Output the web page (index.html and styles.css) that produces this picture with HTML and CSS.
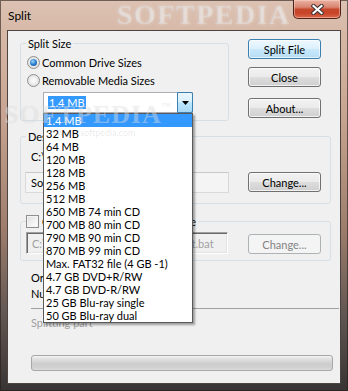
FILE: index.html
```html
<!DOCTYPE html>
<html>
<head>
<meta charset="utf-8">
<title>Split</title>
<link rel="stylesheet" href="styles.css">
</head>
<body>
<div class="window">
  <div class="titlebar">
    <span class="title">Split</span>
    <span class="wm-title">SOFTPEDIA</span>
    <span class="close-btn">
      <svg width="13" height="11" viewBox="0 0 13 11"><path d="M2.5 2l8 7M10.5 2l-8 7" stroke="#3a3030" stroke-width="4.2" stroke-linecap="square" fill="none"/><path d="M2.5 2l8 7M10.5 2l-8 7" stroke="#ffffff" stroke-width="2.2" stroke-linecap="square" fill="none"/></svg>
    </span>
  </div>
  <div class="client">
    <div class="top-row">
      <fieldset class="group g-size">
        <legend>Split Size</legend>
        <div class="size-body">
          <div class="opt"><span class="radio checked"></span><span>Common Drive Sizes</span></div>
          <div class="opt opt2"><span class="radio"></span><span>Removable Media Sizes</span></div>
          <div class="combo">
            <span class="combo-text"><span class="sel">1.4 MB</span></span>
            <span class="combo-btn"><svg width="7" height="4" viewBox="0 0 7 4"><path d="M0 0h7L3.5 4z" fill="#000"/></svg></span>
            <ul class="combo-list">
              <li class="hl">1.4 MB</li>
              <li>32 MB</li>
              <li>64 MB</li>
              <li>120 MB</li>
              <li>128 MB</li>
              <li>256 MB</li>
              <li>512 MB</li>
              <li>650 MB 74 min CD</li>
              <li>700 MB 80 min CD</li>
              <li>790 MB 90 min CD</li>
              <li>870 MB 99 min CD</li>
              <li>Max. FAT32 file (4 GB -1)</li>
              <li>4.7 GB DVD+R/RW</li>
              <li>4.7 GB DVD-R/RW</li>
              <li>25 GB Blu-ray single</li>
              <li>50 GB Blu-ray dual</li>
            </ul>
          </div>
        </div>
      </fieldset>
      <div class="buttons">
        <span class="btn default">Split File</span>
        <span class="btn b-close">Close</span>
        <span class="btn b-about">About...</span>
      </div>
    </div>

    <fieldset class="group g-wide g-dest">
      <legend>Destination</legend>
      <div class="dest-body">
        <div class="dest-path">C:\Users\Softpedia\Desktop</div>
        <div class="field-row">
          <span class="textbox">Softpedia Test File.zip</span>
          <span class="btn">Change...</span>
        </div>
      </div>
    </fieldset>

    <fieldset class="group g-wide g-batch">
      <legend class="chk-legend"><span class="checkbox"></span><span>Create a batch file to recombine</span></legend>
      <div class="batch-body">
        <div class="field-row">
          <span class="textbox disabled">C:\Users\Softpedia\Desktop\Split.bat</span>
          <span class="btn disabled b-change2">Change...</span>
        </div>
      </div>
    </fieldset>

    <div class="info">
      <div class="line">Original size:</div>
      <div class="line line2">Number of parts:</div>
    </div>
    <div class="sep"></div>
    <div class="status">Splitting part</div>
    <div class="progress"></div>
  </div>
  <span class="wm-client">SOFTPEDIA<sup>™</sup></span>
  <span class="wm-url">www.softpedia.com</span>
</div>
</body>
</html>
```
FILE: styles.css
```css
html, body {
  margin: 0;
  padding: 0;
}
body {
  width: 348px;
  height: 391px;
  overflow: hidden;
  font-family: Lato, "Segoe UI", "Noto Sans", sans-serif;
  font-size: 11px;
  line-height: 13px;
  color: #000;
}
.window {
  position: relative;
  width: 348px;
  height: 391px;
  box-sizing: border-box;
  padding: 0 7px 7px 7px;
  display: flex;
  flex-direction: column;
  background: linear-gradient(180deg, #dcc2b3 0px, #d7b9a8 30px, #c6a390 120px, #9c7d6c 230px, #5e5450 320px, #383434 391px);
  box-shadow: inset 0 0 0 1px rgba(40, 28, 24, 0.6);
}
.titlebar {
  position: relative;
  height: 30px;
  flex: none;
  display: flex;
  justify-content: space-between;
  align-items: flex-start;
}
.title {
  margin: 9px 0 0 1px;
  font-size: 12px;
  line-height: 14px;
}
.wm-title {
  position: absolute;
  left: 110px;
  top: 1px;
  font-family: "Liberation Serif", serif;
  font-weight: bold;
  font-size: 28px;
  line-height: 28px;
  letter-spacing: 1.5px;
  color: rgba(255, 255, 255, 0.42);
  text-shadow: 0 0 3px rgba(255, 255, 255, 0.5), 0 0 1px rgba(110, 80, 70, 0.3);
}
.close-btn {
  position: relative;
  width: 48px;
  height: 19px;
  box-sizing: border-box;
  border: 1px solid #4e2218;
  border-top: none;
  border-radius: 0 0 5px 5px;
  background: linear-gradient(180deg, #eab2a2 0%, #d98570 40%, #c6472b 52%, #c8462a 75%, #dd6a4c 100%);
  box-shadow: inset 0 0 0 1px rgba(255, 220, 210, 0.45);
  display: flex;
  align-items: center;
  justify-content: center;
}
.client {
  flex: 1;
  border: 1px solid #4d4340;
  background: #f0f0f0;
  padding: 6px 0 0 12px;
  display: flex;
  flex-direction: column;
  align-items: flex-start;
}
.top-row {
  display: flex;
  align-items: flex-start;
}
.group {
  margin: 0;
  padding: 0;
  border: 1px solid #d5dfe5;
  border-radius: 3px;
  min-inline-size: 0;
  box-sizing: border-box;
}
.group legend {
  margin-left: 5px;
  padding: 0 2px;
  line-height: 13px;
}
.g-size {
  width: 209px;
}
.size-body {
  padding: 6px 0 7px 6px;
}
.opt {
  display: flex;
  align-items: center;
  gap: 2px;
  height: 13px;
}
.opt2 {
  margin-top: 5px;
}
.radio {
  position: relative;
  width: 13px;
  height: 13px;
  box-sizing: border-box;
  border-radius: 50%;
  border: 1px solid #8e8f8f;
  background: radial-gradient(circle at 50% 50%, #ffffff 0%, #f0f0f0 40%, #d4d4d4 100%);
  flex: none;
}
.radio.checked::after {
  content: "";
  position: absolute;
  left: 2px;
  top: 2px;
  width: 7px;
  height: 7px;
  border-radius: 50%;
  background: radial-gradient(circle at 40% 35%, #9ad8f8 0%, #2c7fd0 50%, #0d3f7e 100%);
}
.combo {
  position: relative;
  margin: 5px 0 0 16px;
  width: 150px;
  height: 21px;
  box-sizing: border-box;
  border: 1px solid #abadb3;
  background: #fff;
  display: flex;
}
.combo-text {
  flex: 1;
  display: flex;
  align-items: center;
  padding-left: 4px;
}
.sel {
  background: #3399ff;
  color: #fff;
  padding: 0 1px;
  line-height: 13px;
}
.combo-btn {
  width: 16px;
  height: 21px;
  margin: -1px -1px -1px 0;
  box-sizing: border-box;
  border: 1px solid #3c7fb1;
  border-radius: 0 2px 2px 0;
  background: linear-gradient(180deg, #eaf6fd 0%, #d9f0fc 50%, #bee6fd 50%, #a7d9f5 100%);
  display: flex;
  align-items: center;
  justify-content: center;
}
.combo-list {
  position: absolute;
  left: -1px;
  top: 20px;
  width: 150px;
  margin: 0;
  padding: 0;
  list-style: none;
  box-sizing: border-box;
  border: 1px solid #5a5a5a;
  background: #fff;
  box-shadow: 2px 2px 2px rgba(0, 0, 0, 0.35);
  z-index: 5;
}
.combo-list li {
  height: 13px;
  line-height: 13px;
  padding-left: 2px;
  white-space: nowrap;
}
.combo-list li.hl {
  background: #3399ff;
  color: #fff;
}
.buttons {
  margin-left: 19px;
  padding-top: 2px;
  display: flex;
  flex-direction: column;
}
.btn {
  width: 73px;
  height: 20px;
  box-sizing: border-box;
  border: 1px solid #707070;
  border-radius: 3px;
  background: linear-gradient(180deg, #f2f2f2 0%, #ebebeb 48%, #dddddd 52%, #cfcfcf 100%);
  box-shadow: inset 0 0 0 1px rgba(255, 255, 255, 0.7);
  display: flex;
  align-items: center;
  justify-content: center;
  line-height: 13px;
  flex: none;
}
.btn.default {
  border-color: #3c7fb1;
  background: linear-gradient(180deg, #eef8fe 0%, #dcf0fc 48%, #c8e8fa 52%, #b6ddf5 100%);
  box-shadow: inset 0 0 0 1px rgba(255, 255, 255, 0.6);
}
.b-close {
  margin-top: 8px;
}
.b-about {
  margin-top: 11px;
}
.btn.disabled {
  border-color: #adb2b5;
  background: #f4f4f4;
  color: #838383;
  box-shadow: none;
}
.g-wide {
  width: 311px;
}
.g-dest {
  margin-top: 9px;
}
.dest-body {
  padding: 7px 0 10px 0;
}
.dest-path {
  padding-left: 10px;
  height: 13px;
  white-space: nowrap;
}
.field-row {
  display: flex;
  align-items: flex-start;
}
.dest-body .field-row {
  margin-top: 9px;
}
.textbox {
  margin-left: 4px;
  width: 204px;
  height: 21px;
  box-sizing: border-box;
  border: 1px solid #d9d9d9;
  border-top-color: #c8c8c8;
  background: #f4f4f4;
  padding-left: 5px;
  display: flex;
  align-items: center;
  white-space: nowrap;
  overflow: hidden;
  flex: none;
}
.dest-body .btn {
  margin-left: 19px;
}
.g-batch {
  margin-top: 11px;
}
.chk-legend {
  display: flex;
  align-items: center;
  gap: 3px;
}
.group .chk-legend {
  padding: 0 2px 0 0;
}
.checkbox {
  width: 13px;
  height: 13px;
  box-sizing: border-box;
  border: 1px solid #8e8f8f;
  background: linear-gradient(135deg, #dcdcdc 0%, #f4f4f4 60%, #ffffff 100%);
  box-shadow: inset 0 0 0 1px #f4f4f4;
  flex: none;
}
.batch-body {
  padding: 4px 0 6px 0;
}
.textbox.disabled {
  margin-left: 5px;
  width: 202px;
  height: 22px;
  border: 1px solid;
  border-color: #a0a0a0 #ffffff #ffffff #a0a0a0;
  box-shadow: inset 1px 1px 0 #696969, inset -1px -1px 0 #e3e3e3;
  background: #f0f0f0;
  color: #a0a0a0;
  padding-left: 5px;
}
.b-change2 {
  margin: 2px 0 0 20px;
}
.info {
  margin-top: 10px;
  padding-left: 11px;
}
.line {
  height: 13px;
}
.line2 {
  margin-top: 3px;
}
.sep {
  margin: 8px 0 0 11px;
  width: 308px;
  height: 0;
  border-top: 1px solid #a0a0a0;
}
.status {
  margin-top: 7px;
  padding-left: 11px;
  height: 13px;
  color: #a0a0a0;
}
.progress {
  margin: 26px 0 0 11px;
  width: 302px;
  height: 16px;
  box-sizing: border-box;
  border: 1px solid #a8a8a8;
  border-radius: 3px;
  background: linear-gradient(180deg, #f3f3f3 0%, #dedede 25%, #cdcdcd 55%, #d0d0d0 80%, #dcdcdc 100%);
}
.wm-client {
  position: absolute;
  left: 4px;
  top: 102px;
  font-family: "Liberation Serif", serif;
  font-weight: bold;
  font-size: 26px;
  line-height: 26px;
  letter-spacing: 1px;
  color: rgba(255, 255, 255, 0.4);
  text-shadow: 0 0 1px rgba(0, 0, 0, 0.1);
  z-index: 10;
}
.wm-client sup {
  font-size: 9px;
  vertical-align: top;
  line-height: 9px;
}
.wm-url {
  position: absolute;
  left: 57px;
  top: 128px;
  font-size: 9px;
  line-height: 10px;
  color: rgba(0, 0, 0, 0.1);
  z-index: 10;
}
```
